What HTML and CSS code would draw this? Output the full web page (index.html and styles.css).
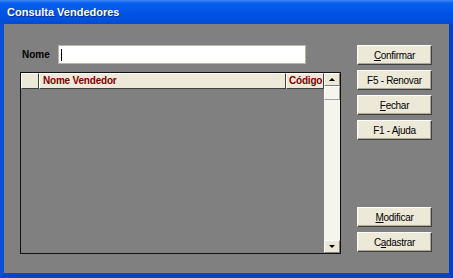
FILE: index.html
```html
<!DOCTYPE html>
<html lang="pt">
<head>
  <meta charset="UTF-8">
  <title>Consulta Vendedores</title>
  <link rel="stylesheet" href="styles.css">
</head>
<body>

  <div class="window">
    <div class="titlebar">Consulta Vendedores</div>

    <div class="client">
      <div class="main">
        <div class="search">
          <label for="nome">Nome</label>
          <div class="field"><span class="caret"></span></div>
        </div>

        <div class="grid">
          <div class="grid-data">
            <div class="grid-head">
              <div class="cell ind"></div>
              <div class="cell col-name">Nome Vendedor</div>
              <div class="cell col-code">Código</div>
            </div>
          </div>
          <div class="vscroll">
            <div class="sbtn"><span class="arrow up"></span></div>
            <div class="thumb"></div>
            <div class="track"></div>
            <div class="sbtn"><span class="arrow down"></span></div>
          </div>
        </div>
      </div>

      <div class="side">
        <div class="btn-group">
          <button class="btn"><u>C</u>onfirmar</button>
          <button class="btn">F5 - Renovar</button>
          <button class="btn"><u>F</u>echar</button>
          <button class="btn">F1 - Ajuda</button>
        </div>
        <div class="btn-group bottom">
          <button class="btn"><u>M</u>odificar</button>
          <button class="btn">C<u>a</u>dastrar</button>
        </div>
      </div>
    </div>
  </div>

</body>
</html>
```

FILE: styles.css
```css
body { margin:0; background:#fff; font-family:"Liberation Sans", Arial, sans-serif; }

.window { width:453px; height:278px; box-sizing:border-box; display:flex; flex-direction:column;
  background:#0050e0; border-left:4px solid #0a4fd8; border-right:4px solid #0a3fc0; border-bottom:5px solid #0a44c8; }
.titlebar { height:24px; margin:0 -4px; padding:0 7px; box-sizing:border-box; line-height:25px;
  background:linear-gradient(#3d8af7 0, #0a5ef0 3px, #0054e6 12px, #0050dc 20px, #0848d0 24px);
  color:#fff; font-size:11px; font-weight:bold; text-shadow:1px 1px 0 #0a2a8a; }

.client { flex:1; background:#808080; display:flex; padding:20px 0 0 16px; gap:16px; }
.main { width:321px; display:flex; flex-direction:column; }

.search { display:flex; align-items:center; height:19px; margin-top:1px; }
.search label { width:38px; padding-left:2px; box-sizing:border-box; font-size:10px; font-weight:bold; color:#000; }
.field { width:248px; height:19px; box-sizing:border-box; background:#fff; border:1px solid #b8b4a8; display:flex; align-items:center; padding-left:2px; }
.caret { width:1px; height:12px; background:#000; }

.grid { margin-top:8px; height:182px; box-sizing:border-box; border:1px solid #101010; display:flex; }
.grid-data { flex:1; }
.grid-head { display:flex; height:16px; background:#ece9d8; }
.cell { box-sizing:border-box; height:16px; border-top:1px solid #fff; border-left:1px solid #fff;
  border-right:1px solid #404040; border-bottom:1px solid #404040;
  font-size:10px; font-weight:bold; color:#800000; line-height:14px; padding-left:3px; white-space:nowrap;
  letter-spacing:-0.2px; overflow:hidden; }
.ind { width:18px; }
.col-name { width:247px; }
.col-code { flex:1; padding-left:2px; }

.vscroll { width:16px; background:#f5f4ef; display:flex; flex-direction:column; }
.sbtn { height:13px; box-sizing:border-box; background:#ece9d8; border:1px solid; border-color:#fff #808080 #808080 #fff;
  display:flex; align-items:center; justify-content:center; }
.arrow { width:0; height:0; border-left:3px solid transparent; border-right:3px solid transparent; }
.arrow.up { border-bottom:3px solid #000; }
.arrow.down { border-top:3px solid #000; }
.thumb { height:14px; box-sizing:border-box; background:#f5f4ef; border:1px solid; border-color:#fff #a0a0a0 #a0a0a0 #fff; }
.track { flex:1; }

.side { display:flex; flex-direction:column; margin-top:1px; }
.btn-group { display:flex; flex-direction:column; gap:5px; }
.btn-group.bottom { margin-top:67px; }
.btn { width:75px; height:20px; padding:0; box-sizing:border-box; background:#ece9d8; color:#000;
  border:1px solid; border-color:#fff #404040 #404040 #fff; box-shadow:inset -1px -1px 0 #aca899;
  font-family:"Liberation Sans", Arial, sans-serif; font-size:10px; letter-spacing:-0.3px; cursor:pointer; }
```
